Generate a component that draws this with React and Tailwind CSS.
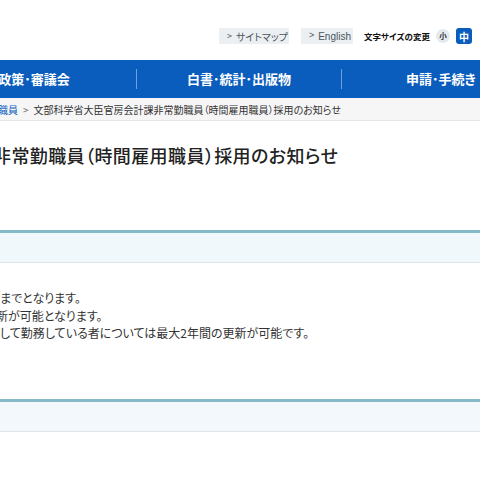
import React from "react";

const jp = "font-['Noto_Sans_CJK_JP','Noto_Sans',sans-serif]";

function NavItem({ children, divider, className = "justify-center" }) {
  return (
    <div className="flex w-[205px] shrink-0 items-center">
      <div className={`flex flex-1 items-center whitespace-nowrap text-[13px] font-bold text-white ${className}`}>
        {children}
      </div>
      {divider && <div className="h-[20px] w-px bg-[#6f9fdc]" />}
    </div>
  );
}

export default function App() {
  return (
    <div className={`relative h-[480px] w-[480px] overflow-hidden bg-white ${jp} [font-feature-settings:'palt']`}>
      {/* header */}
      <div className="flex h-[60px] items-start justify-end pr-[8px] pt-[28px]">
        <div className="flex items-center">
          <div className="flex h-[16px] w-[70px] items-center bg-[#eceff2] pl-[8px] text-[10px] text-[#4a5560]">
            <span className="mr-[4px] text-[9px]">&gt;</span>サイトマップ
          </div>
          <div className="ml-[12px] flex h-[16px] w-[52px] items-center bg-[#eceff2] pl-[8px] text-[10px] text-[#4a5560] font-['Liberation_Sans',sans-serif]">
            <span className="mr-[4px] text-[9px]">&gt;</span>English
          </div>
          <div className="ml-[11px] text-[8.5px] font-bold text-[#111]">文字サイズの変更</div>
          <div className="ml-[6px] flex h-[14px] w-[14px] items-center justify-center rounded-full bg-[#e5eaee] text-[7.5px] font-bold text-[#333]">
            小
          </div>
          <div className="ml-[6px] flex h-[16px] w-[16px] items-center justify-center rounded-[3px] bg-[#0a5dbd] text-[10px] font-bold text-white">
            中
          </div>
        </div>
      </div>

      {/* nav */}
      <div className="flex h-[38px] items-center bg-[#0a5dbd]">
        <div className="ml-[-68px] flex">
          <NavItem divider>政策･審議会</NavItem>
          <NavItem divider>白書･統計･出版物</NavItem>
          <NavItem className="justify-start pl-[64px]">申請･手続き</NavItem>
        </div>
      </div>

      {/* breadcrumb */}
      <div className="flex h-[23px] items-center border-b border-[#e6e6e6] bg-[#f6f6f6] text-[10px] text-[#333]">
        <span className="ml-[-2px] text-[#0a5dbd]">職員</span>
        <span className="mx-[5px] text-[#666]">&gt;</span>
        <span className="whitespace-nowrap">文部科学省大臣官房会計課非常勤職員（時間雇用職員）採用のお知らせ</span>
      </div>

      {/* title */}
      <h1 className="ml-[-7px] mt-[22px] whitespace-nowrap text-[18px] font-medium leading-[24px] tracking-[0.4px] text-[#222]">
        非常勤職員（時間雇用職員）採用のお知らせ
      </h1>

      {/* section 1 */}
      <div className="mt-[63px] h-[33px] border-t-[3px] border-b border-t-[#86b9c8] border-b-[#dde5e6] bg-[#f0f8fc]" />

      {/* body text */}
      <div className="mt-[26px] text-[12px] leading-[17.5px] text-[#333]">
        <p className="whitespace-nowrap">までとなります。</p>
        <p className="ml-[-4px] whitespace-nowrap">新が可能となります。</p>
        <p className="whitespace-nowrap">して勤務している者については最大2年間の更新が可能です。</p>
      </div>

      {/* section 2 */}
      <div className="mt-[57px] h-[33px] border-t-[3px] border-b border-t-[#86b9c8] border-b-[#e3e3e3] bg-[#f2f8fb]" />
    </div>
  );
}
